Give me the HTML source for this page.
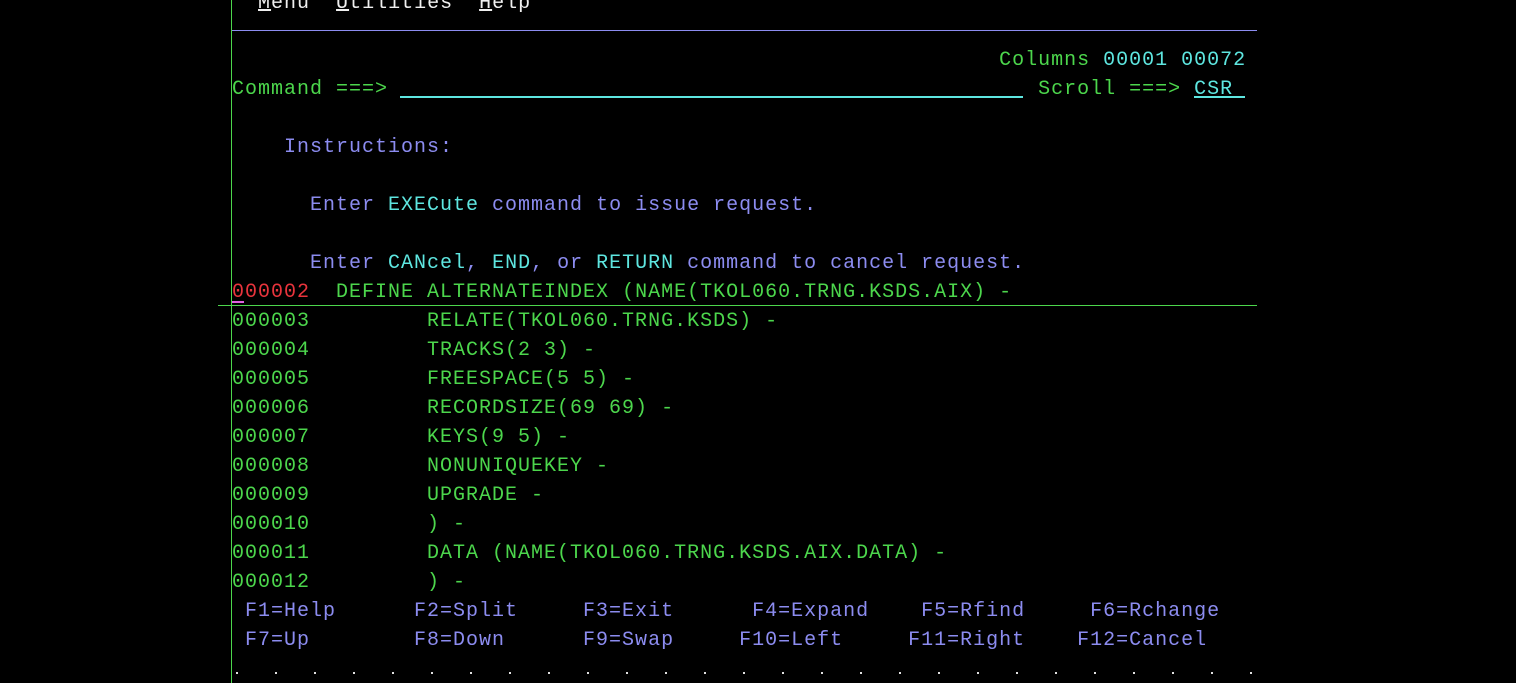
<!DOCTYPE html>
<html><head><style>
html,body{margin:0;padding:0;background:#000;width:1516px;height:683px;overflow:hidden}
.r{position:absolute;left:232px;height:29px;line-height:29px;margin:0;white-space:pre;font-family:"Liberation Mono","DejaVu Sans Mono",monospace;font-size:20px;letter-spacing:1px;color:#4cd64c}
.g{color:#4cd64c}.b{color:#8c8cf0}.t{color:#5ee6e0}.w{color:#f0f0f0}.red{color:#e8343c}
.u{text-decoration:underline}
.ln{position:absolute}
</style></head><body>
<div class="ln" style="left:232px;top:30px;width:1025px;height:1px;background:#8c8cf0"></div>
<div class="ln" style="left:231px;top:0;width:1px;height:683px;background:#4cd64c"></div>
<div class="ln" style="left:218px;top:305px;width:1039px;height:1px;background:#4cd64c"></div>
<div class="ln" style="left:400px;top:96px;width:623px;height:2px;background:#5ee6e0"></div>
<div class="ln" style="left:1194px;top:96px;width:51px;height:2px;background:#5ee6e0"></div>
<div class="ln" style="left:232px;top:301px;width:12px;height:2px;background:#e060e0"></div>
<pre class="r w" style="top:-11px">  <span class="u">M</span>enu  <span class="u">U</span>tilities  <span class="u">H</span>elp</pre>
<pre class="r" style="top:46px">                                                           Columns <span class="t">00001 00072</span></pre>
<pre class="r" style="top:75px">Command ===>                                                  Scroll ===> <span class="t">CSR</span></pre>
<pre class="r b" style="top:133px">    Instructions:</pre>
<pre class="r b" style="top:191px">      Enter <span class="t">EXECute</span> command to issue request.</pre>
<pre class="r b" style="top:249px">      Enter <span class="t">CANcel</span>, <span class="t">END</span>, or <span class="t">RETURN</span> command to cancel request.</pre>
<pre class="r" style="top:278px"><span class="red">000002</span>  DEFINE ALTERNATEINDEX (NAME(TKOL060.TRNG.KSDS.AIX) -</pre>
<pre class="r" style="top:307px">000003         RELATE(TKOL060.TRNG.KSDS) -</pre>
<pre class="r" style="top:336px">000004         TRACKS(2 3) -</pre>
<pre class="r" style="top:365px">000005         FREESPACE(5 5) -</pre>
<pre class="r" style="top:394px">000006         RECORDSIZE(69 69) -</pre>
<pre class="r" style="top:423px">000007         KEYS(9 5) -</pre>
<pre class="r" style="top:452px">000008         NONUNIQUEKEY -</pre>
<pre class="r" style="top:481px">000009         UPGRADE -</pre>
<pre class="r" style="top:510px">000010         ) -</pre>
<pre class="r" style="top:539px">000011         DATA (NAME(TKOL060.TRNG.KSDS.AIX.DATA) -</pre>
<pre class="r" style="top:568px">000012         ) -</pre>
<pre class="r b" style="top:597px"> F1=Help      F2=Split     F3=Exit      F4=Expand    F5=Rfind     F6=Rchange</pre>
<pre class="r b" style="top:626px"> F7=Up        F8=Down      F9=Swap     F10=Left     F11=Right    F12=Cancel</pre>
<svg class="ln" style="left:0;top:0" width="1516" height="683">
<g fill="#e0e0e0">
<rect x="236" y="672" width="2" height="2"/><rect x="275" y="672" width="2" height="2"/><rect x="314" y="672" width="2" height="2"/><rect x="353" y="672" width="2" height="2"/><rect x="392" y="672" width="2" height="2"/><rect x="431" y="672" width="2" height="2"/><rect x="470" y="672" width="2" height="2"/><rect x="509" y="672" width="2" height="2"/><rect x="548" y="672" width="2" height="2"/><rect x="587" y="672" width="2" height="2"/><rect x="626" y="672" width="2" height="2"/><rect x="665" y="672" width="2" height="2"/><rect x="704" y="672" width="2" height="2"/><rect x="743" y="672" width="2" height="2"/><rect x="782" y="672" width="2" height="2"/><rect x="821" y="672" width="2" height="2"/><rect x="860" y="672" width="2" height="2"/><rect x="899" y="672" width="2" height="2"/><rect x="938" y="672" width="2" height="2"/><rect x="977" y="672" width="2" height="2"/><rect x="1016" y="672" width="2" height="2"/><rect x="1055" y="672" width="2" height="2"/><rect x="1094" y="672" width="2" height="2"/><rect x="1133" y="672" width="2" height="2"/><rect x="1172" y="672" width="2" height="2"/><rect x="1211" y="672" width="2" height="2"/><rect x="1250" y="672" width="2" height="2"/>
</g></svg>
</body></html>
